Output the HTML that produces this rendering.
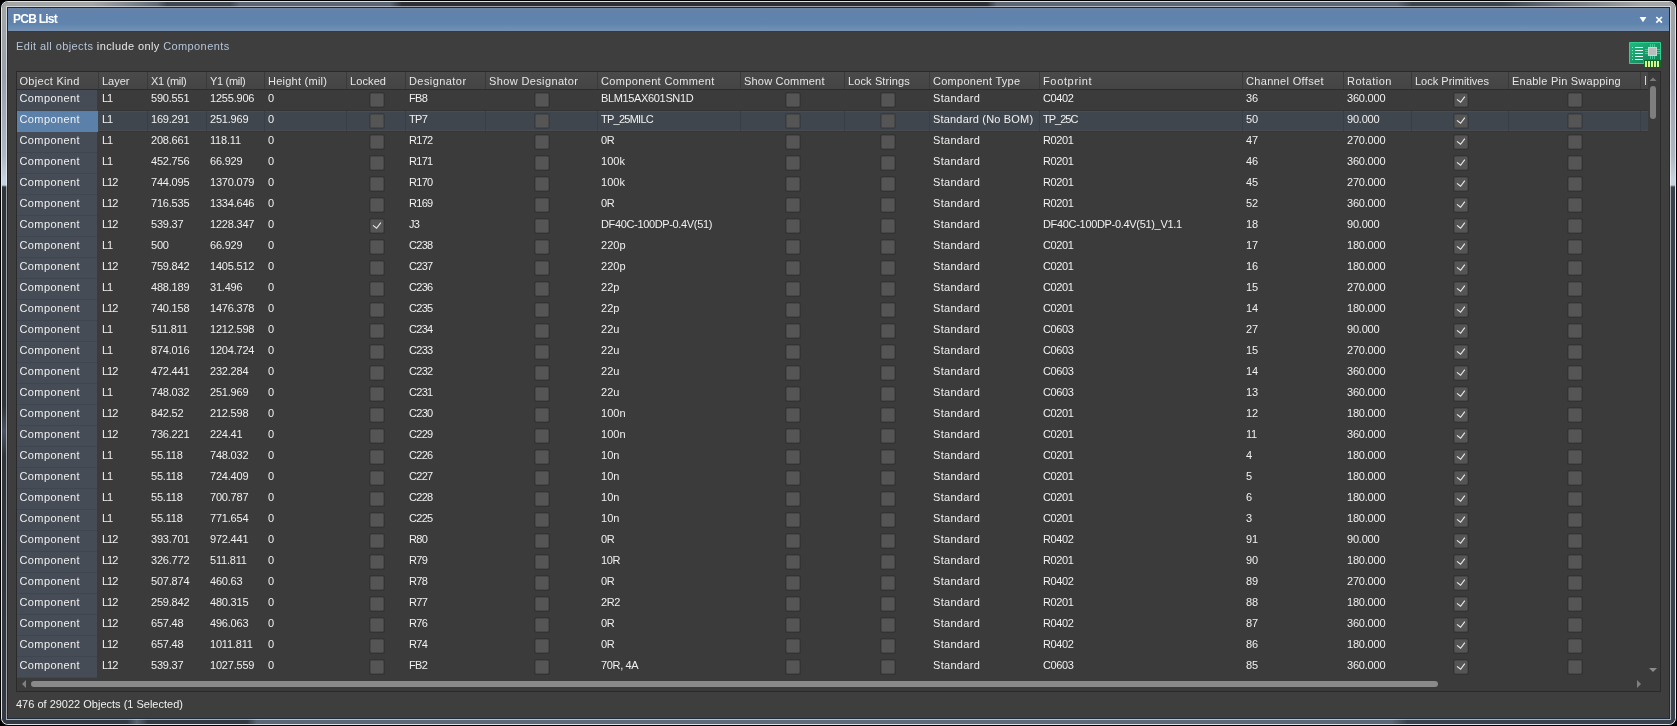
<!DOCTYPE html>
<html><head><meta charset="utf-8"><title>PCB List</title>
<style>
html,body{margin:0;padding:0;}
body{width:1677px;height:726px;overflow:hidden;background:#000;font-family:"Liberation Sans",sans-serif;font-size:11px;color:#f0f0f0;position:relative;}
div,span{position:absolute;box-sizing:border-box;white-space:nowrap;}
.t{height:16px;line-height:16px;letter-spacing:0.3px;}
.n{height:16px;line-height:16px;letter-spacing:-0.2px;}
.cb{width:14px;height:14px;background:#555;border:1px solid #474747;border-radius:1.5px;box-shadow:0 0 0 1px rgba(0,0,0,0.13);}
.h{color:#e6e6e6}
</style></head><body>
<div id="root" style="left:0;top:0;width:1677px;height:726px;will-change:transform">

<div id="frame" style="left:0;top:0;width:1677px;height:726px;border-radius:8px;background:#dde3e8;border:1px solid #000"></div>
<div id="glass" style="left:2px;top:2px;width:1673px;height:722px;border-radius:6px;background:#343a42;overflow:hidden">
<div style="left:0;top:0;width:1673px;height:5px;background:linear-gradient(90deg,#a2a6a7 0px,#a2a6a7 90px,#7c8389 130px,#5f6974 155px,#3f4650 165px,#3f4650 228px,#5b6572 238px,#5b6572 388px,#2b3036 400px,#2b3036 985px,#5c6673 995px,#5c6673 1395px,#3a424c 1410px,#3a424c 1500px,#6d747b 1560px,#a2a6a7 1640px)"></div>
<div style="left:0;bottom:0;width:1673px;height:5px;background:linear-gradient(90deg,#343a42 0px,#343a42 125px,#5a6572 135px,#343a42 146px,#343a42 245px,#5c6875 255px,#606c7a 800px,#5c6875 1390px,#3a434d 1405px,#3a434d 1673px)"></div>
<div style="left:0;top:4px;width:5px;height:714px;background:linear-gradient(180deg,#a2a6a7 0px,#98a1ab 70px,#aeb8c3 150px,#c4d1de 172px,#c4d1de 179px,#2e343a 181px,#2e343a 400px,#4a5462 425px,#2e343a 450px,#343a42 714px)"></div>
<div style="right:0;top:4px;width:5px;height:714px;background:linear-gradient(180deg,#a2a6a7 0px,#98a1ab 70px,#aeb8c3 150px,#c4d1de 172px,#c4d1de 179px,#37424c 181px,#37424c 714px)"></div>
</div>
<div style="left:6px;top:6px;width:1665px;height:1px;background:linear-gradient(90deg,#d5d7d7 -4px,#d5d7d7 86px,#c4c7ca 126px,#b7bcc0 151px,#a9acb0 161px,#a9acb0 224px,#b5bac0 234px,#b5bac0 384px,#a0a2a5 396px,#a0a2a5 981px,#b6bac0 991px,#b6bac0 1391px,#a6aaae 1406px,#a6aaae 1496px,#bdc0c4 1556px,#d5d7d7 1636px)"></div>
<div style="left:6px;top:719px;width:1665px;height:1px;background:linear-gradient(90deg,#aeb0b3 -4px,#aeb0b3 121px,#bdc1c7 131px,#aeb0b3 142px,#aeb0b3 241px,#bec3c8 251px,#bfc4ca 796px,#bec3c8 1386px,#b0b4b8 1401px,#b0b4b8 1669px)"></div>
<div style="left:6px;top:6px;width:1px;height:714px;background:linear-gradient(180deg,#d5d7d7 0px,#d1d5d9 70px,#dbdfe4 150px,#e4eaf0 172px,#e4eaf0 179px,#a1a4a6 181px,#a1a4a6 400px,#aeb2b8 425px,#a1a4a6 450px,#a4a6aa 714px)"></div>
<div style="left:1670px;top:6px;width:1px;height:714px;background:linear-gradient(180deg,#d5d7d7 0px,#d1d5d9 70px,#dbdfe4 150px,#e4eaf0 172px,#e4eaf0 179px,#a5aaae 181px,#a5aaae 714px)"></div>
<div id="inner" style="left:7px;top:7px;width:1663px;height:712px;background:#1d2b3a"></div>
<div id="panel" style="left:8px;top:8px;width:1661px;height:710px;background:#3e3e3e"></div>
<div id="title" style="left:8px;top:8px;width:1661px;height:23px;background:linear-gradient(#6b83a5 0,#6382ab 15%,#5f83ad 40%,#5f84ad 70%,#688bb2 80%,#7690b1 100%)"></div>
<div style="left:8px;top:31px;width:1661px;height:1px;background:#343b45"></div>
<span style="left:13px;top:10px;height:18px;line-height:18px;font-size:12px;font-weight:bold;color:#fff;letter-spacing:-0.75px">PCB List</span>
<span class="t" style="left:16px;top:38px;color:#b3c5d8;letter-spacing:0.4px">Edit all objects <span style="position:static;color:#e6e6e6">include only</span> Components</span>
<div id="tbl" style="left:16px;top:71px;width:1645px;height:621px;background:#3b3b3b;border:1px solid #2a2a2a"></div>
<div style="left:17px;top:72px;width:1631px;height:17px;background:linear-gradient(#4a4a4a,#444)"></div>
<div style="left:17px;top:89px;width:1631px;height:1px;background:#2c2c2c"></div>
<div style="left:17px;top:90px;width:80px;height:588px;background:#3f464f"></div>
<div style="left:17px;top:90px;width:80px;height:20px;background:#454c55"></div>
<div style="left:17px;top:111px;width:1631px;height:20px;background:#40464e"></div>
<div style="left:17px;top:111px;width:81px;height:21px;background:#5b80aa"></div>
<div style="left:98px;top:110px;width:1550px;height:1px;background:#343434"></div>
<div style="left:98px;top:131px;width:1550px;height:1px;background:#35353a"></div>
<div style="left:98px;top:111px;width:1550px;height:1px;background:#494c52"></div>
<div style="left:98px;top:130px;width:1550px;height:1px;background:#4a4c52"></div>
<div style="left:147px;top:111px;width:1px;height:20px;background:#393f47"></div>
<div style="left:206px;top:111px;width:1px;height:20px;background:#393f47"></div>
<div style="left:264px;top:111px;width:1px;height:20px;background:#393f47"></div>
<div style="left:346px;top:111px;width:1px;height:20px;background:#393f47"></div>
<div style="left:405px;top:111px;width:1px;height:20px;background:#393f47"></div>
<div style="left:485px;top:111px;width:1px;height:20px;background:#393f47"></div>
<div style="left:597px;top:111px;width:1px;height:20px;background:#393f47"></div>
<div style="left:740px;top:111px;width:1px;height:20px;background:#393f47"></div>
<div style="left:844px;top:111px;width:1px;height:20px;background:#393f47"></div>
<div style="left:929px;top:111px;width:1px;height:20px;background:#393f47"></div>
<div style="left:1039px;top:111px;width:1px;height:20px;background:#393f47"></div>
<div style="left:1242px;top:111px;width:1px;height:20px;background:#393f47"></div>
<div style="left:1343px;top:111px;width:1px;height:20px;background:#393f47"></div>
<div style="left:1411px;top:111px;width:1px;height:20px;background:#393f47"></div>
<div style="left:1508px;top:111px;width:1px;height:20px;background:#393f47"></div>
<div style="left:1640px;top:111px;width:1px;height:20px;background:#393f47"></div>
<div style="left:17px;top:132px;width:80px;height:20px;background:#454c55"></div>
<div style="left:17px;top:153px;width:80px;height:20px;background:#454c55"></div>
<div style="left:17px;top:174px;width:80px;height:20px;background:#454c55"></div>
<div style="left:17px;top:195px;width:80px;height:20px;background:#454c55"></div>
<div style="left:17px;top:216px;width:80px;height:20px;background:#454c55"></div>
<div style="left:17px;top:237px;width:80px;height:20px;background:#454c55"></div>
<div style="left:17px;top:258px;width:80px;height:20px;background:#454c55"></div>
<div style="left:17px;top:279px;width:80px;height:20px;background:#454c55"></div>
<div style="left:17px;top:300px;width:80px;height:20px;background:#454c55"></div>
<div style="left:17px;top:321px;width:80px;height:20px;background:#454c55"></div>
<div style="left:17px;top:342px;width:80px;height:20px;background:#454c55"></div>
<div style="left:17px;top:363px;width:80px;height:20px;background:#454c55"></div>
<div style="left:17px;top:384px;width:80px;height:20px;background:#454c55"></div>
<div style="left:17px;top:405px;width:80px;height:20px;background:#454c55"></div>
<div style="left:17px;top:426px;width:80px;height:20px;background:#454c55"></div>
<div style="left:17px;top:447px;width:80px;height:20px;background:#454c55"></div>
<div style="left:17px;top:468px;width:80px;height:20px;background:#454c55"></div>
<div style="left:17px;top:489px;width:80px;height:20px;background:#454c55"></div>
<div style="left:17px;top:510px;width:80px;height:20px;background:#454c55"></div>
<div style="left:17px;top:531px;width:80px;height:20px;background:#454c55"></div>
<div style="left:17px;top:552px;width:80px;height:20px;background:#454c55"></div>
<div style="left:17px;top:573px;width:80px;height:20px;background:#454c55"></div>
<div style="left:17px;top:594px;width:80px;height:20px;background:#454c55"></div>
<div style="left:17px;top:615px;width:80px;height:20px;background:#454c55"></div>
<div style="left:17px;top:636px;width:80px;height:20px;background:#454c55"></div>
<div style="left:17px;top:657px;width:80px;height:20px;background:#454c55"></div>
<div style="left:98px;top:72px;width:1px;height:17px;background:#3a3a3a"></div>
<div style="left:147px;top:72px;width:1px;height:17px;background:#3a3a3a"></div>
<div style="left:206px;top:72px;width:1px;height:17px;background:#3a3a3a"></div>
<div style="left:264px;top:72px;width:1px;height:17px;background:#3a3a3a"></div>
<div style="left:346px;top:72px;width:1px;height:17px;background:#3a3a3a"></div>
<div style="left:405px;top:72px;width:1px;height:17px;background:#3a3a3a"></div>
<div style="left:485px;top:72px;width:1px;height:17px;background:#3a3a3a"></div>
<div style="left:597px;top:72px;width:1px;height:17px;background:#3a3a3a"></div>
<div style="left:740px;top:72px;width:1px;height:17px;background:#3a3a3a"></div>
<div style="left:844px;top:72px;width:1px;height:17px;background:#3a3a3a"></div>
<div style="left:929px;top:72px;width:1px;height:17px;background:#3a3a3a"></div>
<div style="left:1039px;top:72px;width:1px;height:17px;background:#3a3a3a"></div>
<div style="left:1242px;top:72px;width:1px;height:17px;background:#3a3a3a"></div>
<div style="left:1343px;top:72px;width:1px;height:17px;background:#3a3a3a"></div>
<div style="left:1411px;top:72px;width:1px;height:17px;background:#3a3a3a"></div>
<div style="left:1508px;top:72px;width:1px;height:17px;background:#3a3a3a"></div>
<div style="left:1640px;top:72px;width:1px;height:17px;background:#3a3a3a"></div>
<span class="t h" style="left:19.5px;top:73px;letter-spacing:0.3px">Object Kind</span>
<span class="t h" style="left:102px;top:73px;letter-spacing:0px">Layer</span>
<span class="t h" style="left:151px;top:73px;letter-spacing:-0.3px">X1 (mil)</span>
<span class="t h" style="left:210px;top:73px;letter-spacing:-0.3px">Y1 (mil)</span>
<span class="t h" style="left:268px;top:73px;letter-spacing:0.25px">Height (mil)</span>
<span class="t h" style="left:350px;top:73px;letter-spacing:0.1px">Locked</span>
<span class="t h" style="left:409px;top:73px;letter-spacing:0.43px">Designator</span>
<span class="t h" style="left:489px;top:73px;letter-spacing:0.37px">Show Designator</span>
<span class="t h" style="left:601px;top:73px;letter-spacing:0.35px">Component Comment</span>
<span class="t h" style="left:744px;top:73px;letter-spacing:0.2px">Show Comment</span>
<span class="t h" style="left:848px;top:73px;letter-spacing:0.12px">Lock Strings</span>
<span class="t h" style="left:933px;top:73px;letter-spacing:0.27px">Component Type</span>
<span class="t h" style="left:1043px;top:73px;letter-spacing:0.65px">Footprint</span>
<span class="t h" style="left:1246px;top:73px;letter-spacing:0.33px">Channel Offset</span>
<span class="t h" style="left:1347px;top:73px;letter-spacing:0.5px">Rotation</span>
<span class="t h" style="left:1415px;top:73px;letter-spacing:0px">Lock Primitives</span>
<span class="t h" style="left:1512px;top:73px;letter-spacing:0.23px">Enable Pin Swapping</span>
<span class="t" style="left:19.5px;top:90px;letter-spacing:0.4px">Component</span>
<span class="n" style="left:102px;top:90px;letter-spacing:-1px">L1</span>
<span class="n" style="left:151px;top:90px">590.551</span>
<span class="n" style="left:210px;top:90px">1255.906</span>
<span class="n" style="left:268px;top:90px">0</span>
<div class="cb" style="left:370px;top:93px"></div>
<span class="n" style="left:409px;top:90px;letter-spacing:-0.7px">FB8</span>
<div class="cb" style="left:535px;top:93px"></div>
<span class="n" style="left:601px;top:90px;letter-spacing:-0.35px">BLM15AX601SN1D</span>
<div class="cb" style="left:786px;top:93px"></div>
<div class="cb" style="left:881px;top:93px"></div>
<span class="t" style="left:933px;top:90px;letter-spacing:0.3px">Standard</span>
<span class="n" style="left:1043px;top:90px;letter-spacing:-0.4px">C0402</span>
<span class="n" style="left:1246px;top:90px">36</span>
<span class="n" style="left:1347px;top:90px">360.000</span>
<div class="cb" style="left:1454px;top:93px"><svg width="12" height="12" viewBox="0 0 12 12" style="position:absolute;left:0;top:0"><path d="M2 5.4 L5.6 8.3 L9.8 2.6" fill="none" stroke="#e8e8e8" stroke-width="1.15"/></svg></div>
<div class="cb" style="left:1568px;top:93px"></div>
<span class="t" style="left:19.5px;top:111px;letter-spacing:0.4px">Component</span>
<span class="n" style="left:102px;top:111px;letter-spacing:-1px">L1</span>
<span class="n" style="left:151px;top:111px">169.291</span>
<span class="n" style="left:210px;top:111px">251.969</span>
<span class="n" style="left:268px;top:111px">0</span>
<div class="cb" style="left:370px;top:114px"></div>
<span class="n" style="left:409px;top:111px;letter-spacing:-0.7px">TP7</span>
<div class="cb" style="left:535px;top:114px"></div>
<span class="n" style="left:601px;top:111px;letter-spacing:-0.75px">TP_25MILC</span>
<div class="cb" style="left:786px;top:114px"></div>
<div class="cb" style="left:881px;top:114px"></div>
<span class="t" style="left:933px;top:111px;letter-spacing:0.18px">Standard (No BOM)</span>
<span class="n" style="left:1043px;top:111px;letter-spacing:-1.0px">TP_25C</span>
<span class="n" style="left:1246px;top:111px">50</span>
<span class="n" style="left:1347px;top:111px">90.000</span>
<div class="cb" style="left:1454px;top:114px"><svg width="12" height="12" viewBox="0 0 12 12" style="position:absolute;left:0;top:0"><path d="M2 5.4 L5.6 8.3 L9.8 2.6" fill="none" stroke="#e8e8e8" stroke-width="1.15"/></svg></div>
<div class="cb" style="left:1568px;top:114px"></div>
<span class="t" style="left:19.5px;top:132px;letter-spacing:0.4px">Component</span>
<span class="n" style="left:102px;top:132px;letter-spacing:-1px">L1</span>
<span class="n" style="left:151px;top:132px">208.661</span>
<span class="n" style="left:210px;top:132px">118.11</span>
<span class="n" style="left:268px;top:132px">0</span>
<div class="cb" style="left:370px;top:135px"></div>
<span class="n" style="left:409px;top:132px;letter-spacing:-0.7px">R172</span>
<div class="cb" style="left:535px;top:135px"></div>
<span class="n" style="left:601px;top:132px;letter-spacing:-0.35px">0R</span>
<div class="cb" style="left:786px;top:135px"></div>
<div class="cb" style="left:881px;top:135px"></div>
<span class="t" style="left:933px;top:132px;letter-spacing:0.3px">Standard</span>
<span class="n" style="left:1043px;top:132px;letter-spacing:-0.4px">R0201</span>
<span class="n" style="left:1246px;top:132px">47</span>
<span class="n" style="left:1347px;top:132px">270.000</span>
<div class="cb" style="left:1454px;top:135px"><svg width="12" height="12" viewBox="0 0 12 12" style="position:absolute;left:0;top:0"><path d="M2 5.4 L5.6 8.3 L9.8 2.6" fill="none" stroke="#e8e8e8" stroke-width="1.15"/></svg></div>
<div class="cb" style="left:1568px;top:135px"></div>
<span class="t" style="left:19.5px;top:153px;letter-spacing:0.4px">Component</span>
<span class="n" style="left:102px;top:153px;letter-spacing:-1px">L1</span>
<span class="n" style="left:151px;top:153px">452.756</span>
<span class="n" style="left:210px;top:153px">66.929</span>
<span class="n" style="left:268px;top:153px">0</span>
<div class="cb" style="left:370px;top:156px"></div>
<span class="n" style="left:409px;top:153px;letter-spacing:-0.7px">R171</span>
<div class="cb" style="left:535px;top:156px"></div>
<span class="n" style="left:601px;top:153px;letter-spacing:0.05px">100k</span>
<div class="cb" style="left:786px;top:156px"></div>
<div class="cb" style="left:881px;top:156px"></div>
<span class="t" style="left:933px;top:153px;letter-spacing:0.3px">Standard</span>
<span class="n" style="left:1043px;top:153px;letter-spacing:-0.4px">R0201</span>
<span class="n" style="left:1246px;top:153px">46</span>
<span class="n" style="left:1347px;top:153px">360.000</span>
<div class="cb" style="left:1454px;top:156px"><svg width="12" height="12" viewBox="0 0 12 12" style="position:absolute;left:0;top:0"><path d="M2 5.4 L5.6 8.3 L9.8 2.6" fill="none" stroke="#e8e8e8" stroke-width="1.15"/></svg></div>
<div class="cb" style="left:1568px;top:156px"></div>
<span class="t" style="left:19.5px;top:174px;letter-spacing:0.4px">Component</span>
<span class="n" style="left:102px;top:174px;letter-spacing:-1px">L12</span>
<span class="n" style="left:151px;top:174px">744.095</span>
<span class="n" style="left:210px;top:174px">1370.079</span>
<span class="n" style="left:268px;top:174px">0</span>
<div class="cb" style="left:370px;top:177px"></div>
<span class="n" style="left:409px;top:174px;letter-spacing:-0.7px">R170</span>
<div class="cb" style="left:535px;top:177px"></div>
<span class="n" style="left:601px;top:174px;letter-spacing:0.05px">100k</span>
<div class="cb" style="left:786px;top:177px"></div>
<div class="cb" style="left:881px;top:177px"></div>
<span class="t" style="left:933px;top:174px;letter-spacing:0.3px">Standard</span>
<span class="n" style="left:1043px;top:174px;letter-spacing:-0.4px">R0201</span>
<span class="n" style="left:1246px;top:174px">45</span>
<span class="n" style="left:1347px;top:174px">270.000</span>
<div class="cb" style="left:1454px;top:177px"><svg width="12" height="12" viewBox="0 0 12 12" style="position:absolute;left:0;top:0"><path d="M2 5.4 L5.6 8.3 L9.8 2.6" fill="none" stroke="#e8e8e8" stroke-width="1.15"/></svg></div>
<div class="cb" style="left:1568px;top:177px"></div>
<span class="t" style="left:19.5px;top:195px;letter-spacing:0.4px">Component</span>
<span class="n" style="left:102px;top:195px;letter-spacing:-1px">L12</span>
<span class="n" style="left:151px;top:195px">716.535</span>
<span class="n" style="left:210px;top:195px">1334.646</span>
<span class="n" style="left:268px;top:195px">0</span>
<div class="cb" style="left:370px;top:198px"></div>
<span class="n" style="left:409px;top:195px;letter-spacing:-0.7px">R169</span>
<div class="cb" style="left:535px;top:198px"></div>
<span class="n" style="left:601px;top:195px;letter-spacing:-0.35px">0R</span>
<div class="cb" style="left:786px;top:198px"></div>
<div class="cb" style="left:881px;top:198px"></div>
<span class="t" style="left:933px;top:195px;letter-spacing:0.3px">Standard</span>
<span class="n" style="left:1043px;top:195px;letter-spacing:-0.4px">R0201</span>
<span class="n" style="left:1246px;top:195px">52</span>
<span class="n" style="left:1347px;top:195px">360.000</span>
<div class="cb" style="left:1454px;top:198px"><svg width="12" height="12" viewBox="0 0 12 12" style="position:absolute;left:0;top:0"><path d="M2 5.4 L5.6 8.3 L9.8 2.6" fill="none" stroke="#e8e8e8" stroke-width="1.15"/></svg></div>
<div class="cb" style="left:1568px;top:198px"></div>
<span class="t" style="left:19.5px;top:216px;letter-spacing:0.4px">Component</span>
<span class="n" style="left:102px;top:216px;letter-spacing:-1px">L12</span>
<span class="n" style="left:151px;top:216px">539.37</span>
<span class="n" style="left:210px;top:216px">1228.347</span>
<span class="n" style="left:268px;top:216px">0</span>
<div class="cb" style="left:370px;top:219px"><svg width="12" height="12" viewBox="0 0 12 12" style="position:absolute;left:0;top:0"><path d="M2 5.4 L5.6 8.3 L9.8 2.6" fill="none" stroke="#e8e8e8" stroke-width="1.15"/></svg></div>
<span class="n" style="left:409px;top:216px;letter-spacing:-0.7px">J3</span>
<div class="cb" style="left:535px;top:219px"></div>
<span class="n" style="left:601px;top:216px;letter-spacing:-0.35px">DF40C-100DP-0.4V(51)</span>
<div class="cb" style="left:786px;top:219px"></div>
<div class="cb" style="left:881px;top:219px"></div>
<span class="t" style="left:933px;top:216px;letter-spacing:0.3px">Standard</span>
<span class="n" style="left:1043px;top:216px;letter-spacing:-0.32px">DF40C-100DP-0.4V(51)_V1.1</span>
<span class="n" style="left:1246px;top:216px">18</span>
<span class="n" style="left:1347px;top:216px">90.000</span>
<div class="cb" style="left:1454px;top:219px"><svg width="12" height="12" viewBox="0 0 12 12" style="position:absolute;left:0;top:0"><path d="M2 5.4 L5.6 8.3 L9.8 2.6" fill="none" stroke="#e8e8e8" stroke-width="1.15"/></svg></div>
<div class="cb" style="left:1568px;top:219px"></div>
<span class="t" style="left:19.5px;top:237px;letter-spacing:0.4px">Component</span>
<span class="n" style="left:102px;top:237px;letter-spacing:-1px">L1</span>
<span class="n" style="left:151px;top:237px">500</span>
<span class="n" style="left:210px;top:237px">66.929</span>
<span class="n" style="left:268px;top:237px">0</span>
<div class="cb" style="left:370px;top:240px"></div>
<span class="n" style="left:409px;top:237px;letter-spacing:-0.7px">C238</span>
<div class="cb" style="left:535px;top:240px"></div>
<span class="n" style="left:601px;top:237px;letter-spacing:0.05px">220p</span>
<div class="cb" style="left:786px;top:240px"></div>
<div class="cb" style="left:881px;top:240px"></div>
<span class="t" style="left:933px;top:237px;letter-spacing:0.3px">Standard</span>
<span class="n" style="left:1043px;top:237px;letter-spacing:-0.4px">C0201</span>
<span class="n" style="left:1246px;top:237px">17</span>
<span class="n" style="left:1347px;top:237px">180.000</span>
<div class="cb" style="left:1454px;top:240px"><svg width="12" height="12" viewBox="0 0 12 12" style="position:absolute;left:0;top:0"><path d="M2 5.4 L5.6 8.3 L9.8 2.6" fill="none" stroke="#e8e8e8" stroke-width="1.15"/></svg></div>
<div class="cb" style="left:1568px;top:240px"></div>
<span class="t" style="left:19.5px;top:258px;letter-spacing:0.4px">Component</span>
<span class="n" style="left:102px;top:258px;letter-spacing:-1px">L12</span>
<span class="n" style="left:151px;top:258px">759.842</span>
<span class="n" style="left:210px;top:258px">1405.512</span>
<span class="n" style="left:268px;top:258px">0</span>
<div class="cb" style="left:370px;top:261px"></div>
<span class="n" style="left:409px;top:258px;letter-spacing:-0.7px">C237</span>
<div class="cb" style="left:535px;top:261px"></div>
<span class="n" style="left:601px;top:258px;letter-spacing:0.05px">220p</span>
<div class="cb" style="left:786px;top:261px"></div>
<div class="cb" style="left:881px;top:261px"></div>
<span class="t" style="left:933px;top:258px;letter-spacing:0.3px">Standard</span>
<span class="n" style="left:1043px;top:258px;letter-spacing:-0.4px">C0201</span>
<span class="n" style="left:1246px;top:258px">16</span>
<span class="n" style="left:1347px;top:258px">180.000</span>
<div class="cb" style="left:1454px;top:261px"><svg width="12" height="12" viewBox="0 0 12 12" style="position:absolute;left:0;top:0"><path d="M2 5.4 L5.6 8.3 L9.8 2.6" fill="none" stroke="#e8e8e8" stroke-width="1.15"/></svg></div>
<div class="cb" style="left:1568px;top:261px"></div>
<span class="t" style="left:19.5px;top:279px;letter-spacing:0.4px">Component</span>
<span class="n" style="left:102px;top:279px;letter-spacing:-1px">L1</span>
<span class="n" style="left:151px;top:279px">488.189</span>
<span class="n" style="left:210px;top:279px">31.496</span>
<span class="n" style="left:268px;top:279px">0</span>
<div class="cb" style="left:370px;top:282px"></div>
<span class="n" style="left:409px;top:279px;letter-spacing:-0.7px">C236</span>
<div class="cb" style="left:535px;top:282px"></div>
<span class="n" style="left:601px;top:279px;letter-spacing:0.05px">22p</span>
<div class="cb" style="left:786px;top:282px"></div>
<div class="cb" style="left:881px;top:282px"></div>
<span class="t" style="left:933px;top:279px;letter-spacing:0.3px">Standard</span>
<span class="n" style="left:1043px;top:279px;letter-spacing:-0.4px">C0201</span>
<span class="n" style="left:1246px;top:279px">15</span>
<span class="n" style="left:1347px;top:279px">270.000</span>
<div class="cb" style="left:1454px;top:282px"><svg width="12" height="12" viewBox="0 0 12 12" style="position:absolute;left:0;top:0"><path d="M2 5.4 L5.6 8.3 L9.8 2.6" fill="none" stroke="#e8e8e8" stroke-width="1.15"/></svg></div>
<div class="cb" style="left:1568px;top:282px"></div>
<span class="t" style="left:19.5px;top:300px;letter-spacing:0.4px">Component</span>
<span class="n" style="left:102px;top:300px;letter-spacing:-1px">L12</span>
<span class="n" style="left:151px;top:300px">740.158</span>
<span class="n" style="left:210px;top:300px">1476.378</span>
<span class="n" style="left:268px;top:300px">0</span>
<div class="cb" style="left:370px;top:303px"></div>
<span class="n" style="left:409px;top:300px;letter-spacing:-0.7px">C235</span>
<div class="cb" style="left:535px;top:303px"></div>
<span class="n" style="left:601px;top:300px;letter-spacing:0.05px">22p</span>
<div class="cb" style="left:786px;top:303px"></div>
<div class="cb" style="left:881px;top:303px"></div>
<span class="t" style="left:933px;top:300px;letter-spacing:0.3px">Standard</span>
<span class="n" style="left:1043px;top:300px;letter-spacing:-0.4px">C0201</span>
<span class="n" style="left:1246px;top:300px">14</span>
<span class="n" style="left:1347px;top:300px">180.000</span>
<div class="cb" style="left:1454px;top:303px"><svg width="12" height="12" viewBox="0 0 12 12" style="position:absolute;left:0;top:0"><path d="M2 5.4 L5.6 8.3 L9.8 2.6" fill="none" stroke="#e8e8e8" stroke-width="1.15"/></svg></div>
<div class="cb" style="left:1568px;top:303px"></div>
<span class="t" style="left:19.5px;top:321px;letter-spacing:0.4px">Component</span>
<span class="n" style="left:102px;top:321px;letter-spacing:-1px">L1</span>
<span class="n" style="left:151px;top:321px">511.811</span>
<span class="n" style="left:210px;top:321px">1212.598</span>
<span class="n" style="left:268px;top:321px">0</span>
<div class="cb" style="left:370px;top:324px"></div>
<span class="n" style="left:409px;top:321px;letter-spacing:-0.7px">C234</span>
<div class="cb" style="left:535px;top:324px"></div>
<span class="n" style="left:601px;top:321px;letter-spacing:0.05px">22u</span>
<div class="cb" style="left:786px;top:324px"></div>
<div class="cb" style="left:881px;top:324px"></div>
<span class="t" style="left:933px;top:321px;letter-spacing:0.3px">Standard</span>
<span class="n" style="left:1043px;top:321px;letter-spacing:-0.4px">C0603</span>
<span class="n" style="left:1246px;top:321px">27</span>
<span class="n" style="left:1347px;top:321px">90.000</span>
<div class="cb" style="left:1454px;top:324px"><svg width="12" height="12" viewBox="0 0 12 12" style="position:absolute;left:0;top:0"><path d="M2 5.4 L5.6 8.3 L9.8 2.6" fill="none" stroke="#e8e8e8" stroke-width="1.15"/></svg></div>
<div class="cb" style="left:1568px;top:324px"></div>
<span class="t" style="left:19.5px;top:342px;letter-spacing:0.4px">Component</span>
<span class="n" style="left:102px;top:342px;letter-spacing:-1px">L1</span>
<span class="n" style="left:151px;top:342px">874.016</span>
<span class="n" style="left:210px;top:342px">1204.724</span>
<span class="n" style="left:268px;top:342px">0</span>
<div class="cb" style="left:370px;top:345px"></div>
<span class="n" style="left:409px;top:342px;letter-spacing:-0.7px">C233</span>
<div class="cb" style="left:535px;top:345px"></div>
<span class="n" style="left:601px;top:342px;letter-spacing:0.05px">22u</span>
<div class="cb" style="left:786px;top:345px"></div>
<div class="cb" style="left:881px;top:345px"></div>
<span class="t" style="left:933px;top:342px;letter-spacing:0.3px">Standard</span>
<span class="n" style="left:1043px;top:342px;letter-spacing:-0.4px">C0603</span>
<span class="n" style="left:1246px;top:342px">15</span>
<span class="n" style="left:1347px;top:342px">270.000</span>
<div class="cb" style="left:1454px;top:345px"><svg width="12" height="12" viewBox="0 0 12 12" style="position:absolute;left:0;top:0"><path d="M2 5.4 L5.6 8.3 L9.8 2.6" fill="none" stroke="#e8e8e8" stroke-width="1.15"/></svg></div>
<div class="cb" style="left:1568px;top:345px"></div>
<span class="t" style="left:19.5px;top:363px;letter-spacing:0.4px">Component</span>
<span class="n" style="left:102px;top:363px;letter-spacing:-1px">L12</span>
<span class="n" style="left:151px;top:363px">472.441</span>
<span class="n" style="left:210px;top:363px">232.284</span>
<span class="n" style="left:268px;top:363px">0</span>
<div class="cb" style="left:370px;top:366px"></div>
<span class="n" style="left:409px;top:363px;letter-spacing:-0.7px">C232</span>
<div class="cb" style="left:535px;top:366px"></div>
<span class="n" style="left:601px;top:363px;letter-spacing:0.05px">22u</span>
<div class="cb" style="left:786px;top:366px"></div>
<div class="cb" style="left:881px;top:366px"></div>
<span class="t" style="left:933px;top:363px;letter-spacing:0.3px">Standard</span>
<span class="n" style="left:1043px;top:363px;letter-spacing:-0.4px">C0603</span>
<span class="n" style="left:1246px;top:363px">14</span>
<span class="n" style="left:1347px;top:363px">360.000</span>
<div class="cb" style="left:1454px;top:366px"><svg width="12" height="12" viewBox="0 0 12 12" style="position:absolute;left:0;top:0"><path d="M2 5.4 L5.6 8.3 L9.8 2.6" fill="none" stroke="#e8e8e8" stroke-width="1.15"/></svg></div>
<div class="cb" style="left:1568px;top:366px"></div>
<span class="t" style="left:19.5px;top:384px;letter-spacing:0.4px">Component</span>
<span class="n" style="left:102px;top:384px;letter-spacing:-1px">L1</span>
<span class="n" style="left:151px;top:384px">748.032</span>
<span class="n" style="left:210px;top:384px">251.969</span>
<span class="n" style="left:268px;top:384px">0</span>
<div class="cb" style="left:370px;top:387px"></div>
<span class="n" style="left:409px;top:384px;letter-spacing:-0.7px">C231</span>
<div class="cb" style="left:535px;top:387px"></div>
<span class="n" style="left:601px;top:384px;letter-spacing:0.05px">22u</span>
<div class="cb" style="left:786px;top:387px"></div>
<div class="cb" style="left:881px;top:387px"></div>
<span class="t" style="left:933px;top:384px;letter-spacing:0.3px">Standard</span>
<span class="n" style="left:1043px;top:384px;letter-spacing:-0.4px">C0603</span>
<span class="n" style="left:1246px;top:384px">13</span>
<span class="n" style="left:1347px;top:384px">360.000</span>
<div class="cb" style="left:1454px;top:387px"><svg width="12" height="12" viewBox="0 0 12 12" style="position:absolute;left:0;top:0"><path d="M2 5.4 L5.6 8.3 L9.8 2.6" fill="none" stroke="#e8e8e8" stroke-width="1.15"/></svg></div>
<div class="cb" style="left:1568px;top:387px"></div>
<span class="t" style="left:19.5px;top:405px;letter-spacing:0.4px">Component</span>
<span class="n" style="left:102px;top:405px;letter-spacing:-1px">L12</span>
<span class="n" style="left:151px;top:405px">842.52</span>
<span class="n" style="left:210px;top:405px">212.598</span>
<span class="n" style="left:268px;top:405px">0</span>
<div class="cb" style="left:370px;top:408px"></div>
<span class="n" style="left:409px;top:405px;letter-spacing:-0.7px">C230</span>
<div class="cb" style="left:535px;top:408px"></div>
<span class="n" style="left:601px;top:405px;letter-spacing:0.05px">100n</span>
<div class="cb" style="left:786px;top:408px"></div>
<div class="cb" style="left:881px;top:408px"></div>
<span class="t" style="left:933px;top:405px;letter-spacing:0.3px">Standard</span>
<span class="n" style="left:1043px;top:405px;letter-spacing:-0.4px">C0201</span>
<span class="n" style="left:1246px;top:405px">12</span>
<span class="n" style="left:1347px;top:405px">180.000</span>
<div class="cb" style="left:1454px;top:408px"><svg width="12" height="12" viewBox="0 0 12 12" style="position:absolute;left:0;top:0"><path d="M2 5.4 L5.6 8.3 L9.8 2.6" fill="none" stroke="#e8e8e8" stroke-width="1.15"/></svg></div>
<div class="cb" style="left:1568px;top:408px"></div>
<span class="t" style="left:19.5px;top:426px;letter-spacing:0.4px">Component</span>
<span class="n" style="left:102px;top:426px;letter-spacing:-1px">L12</span>
<span class="n" style="left:151px;top:426px">736.221</span>
<span class="n" style="left:210px;top:426px">224.41</span>
<span class="n" style="left:268px;top:426px">0</span>
<div class="cb" style="left:370px;top:429px"></div>
<span class="n" style="left:409px;top:426px;letter-spacing:-0.7px">C229</span>
<div class="cb" style="left:535px;top:429px"></div>
<span class="n" style="left:601px;top:426px;letter-spacing:0.05px">100n</span>
<div class="cb" style="left:786px;top:429px"></div>
<div class="cb" style="left:881px;top:429px"></div>
<span class="t" style="left:933px;top:426px;letter-spacing:0.3px">Standard</span>
<span class="n" style="left:1043px;top:426px;letter-spacing:-0.4px">C0201</span>
<span class="n" style="left:1246px;top:426px">11</span>
<span class="n" style="left:1347px;top:426px">360.000</span>
<div class="cb" style="left:1454px;top:429px"><svg width="12" height="12" viewBox="0 0 12 12" style="position:absolute;left:0;top:0"><path d="M2 5.4 L5.6 8.3 L9.8 2.6" fill="none" stroke="#e8e8e8" stroke-width="1.15"/></svg></div>
<div class="cb" style="left:1568px;top:429px"></div>
<span class="t" style="left:19.5px;top:447px;letter-spacing:0.4px">Component</span>
<span class="n" style="left:102px;top:447px;letter-spacing:-1px">L1</span>
<span class="n" style="left:151px;top:447px">55.118</span>
<span class="n" style="left:210px;top:447px">748.032</span>
<span class="n" style="left:268px;top:447px">0</span>
<div class="cb" style="left:370px;top:450px"></div>
<span class="n" style="left:409px;top:447px;letter-spacing:-0.7px">C226</span>
<div class="cb" style="left:535px;top:450px"></div>
<span class="n" style="left:601px;top:447px;letter-spacing:0.05px">10n</span>
<div class="cb" style="left:786px;top:450px"></div>
<div class="cb" style="left:881px;top:450px"></div>
<span class="t" style="left:933px;top:447px;letter-spacing:0.3px">Standard</span>
<span class="n" style="left:1043px;top:447px;letter-spacing:-0.4px">C0201</span>
<span class="n" style="left:1246px;top:447px">4</span>
<span class="n" style="left:1347px;top:447px">180.000</span>
<div class="cb" style="left:1454px;top:450px"><svg width="12" height="12" viewBox="0 0 12 12" style="position:absolute;left:0;top:0"><path d="M2 5.4 L5.6 8.3 L9.8 2.6" fill="none" stroke="#e8e8e8" stroke-width="1.15"/></svg></div>
<div class="cb" style="left:1568px;top:450px"></div>
<span class="t" style="left:19.5px;top:468px;letter-spacing:0.4px">Component</span>
<span class="n" style="left:102px;top:468px;letter-spacing:-1px">L1</span>
<span class="n" style="left:151px;top:468px">55.118</span>
<span class="n" style="left:210px;top:468px">724.409</span>
<span class="n" style="left:268px;top:468px">0</span>
<div class="cb" style="left:370px;top:471px"></div>
<span class="n" style="left:409px;top:468px;letter-spacing:-0.7px">C227</span>
<div class="cb" style="left:535px;top:471px"></div>
<span class="n" style="left:601px;top:468px;letter-spacing:0.05px">10n</span>
<div class="cb" style="left:786px;top:471px"></div>
<div class="cb" style="left:881px;top:471px"></div>
<span class="t" style="left:933px;top:468px;letter-spacing:0.3px">Standard</span>
<span class="n" style="left:1043px;top:468px;letter-spacing:-0.4px">C0201</span>
<span class="n" style="left:1246px;top:468px">5</span>
<span class="n" style="left:1347px;top:468px">180.000</span>
<div class="cb" style="left:1454px;top:471px"><svg width="12" height="12" viewBox="0 0 12 12" style="position:absolute;left:0;top:0"><path d="M2 5.4 L5.6 8.3 L9.8 2.6" fill="none" stroke="#e8e8e8" stroke-width="1.15"/></svg></div>
<div class="cb" style="left:1568px;top:471px"></div>
<span class="t" style="left:19.5px;top:489px;letter-spacing:0.4px">Component</span>
<span class="n" style="left:102px;top:489px;letter-spacing:-1px">L1</span>
<span class="n" style="left:151px;top:489px">55.118</span>
<span class="n" style="left:210px;top:489px">700.787</span>
<span class="n" style="left:268px;top:489px">0</span>
<div class="cb" style="left:370px;top:492px"></div>
<span class="n" style="left:409px;top:489px;letter-spacing:-0.7px">C228</span>
<div class="cb" style="left:535px;top:492px"></div>
<span class="n" style="left:601px;top:489px;letter-spacing:0.05px">10n</span>
<div class="cb" style="left:786px;top:492px"></div>
<div class="cb" style="left:881px;top:492px"></div>
<span class="t" style="left:933px;top:489px;letter-spacing:0.3px">Standard</span>
<span class="n" style="left:1043px;top:489px;letter-spacing:-0.4px">C0201</span>
<span class="n" style="left:1246px;top:489px">6</span>
<span class="n" style="left:1347px;top:489px">180.000</span>
<div class="cb" style="left:1454px;top:492px"><svg width="12" height="12" viewBox="0 0 12 12" style="position:absolute;left:0;top:0"><path d="M2 5.4 L5.6 8.3 L9.8 2.6" fill="none" stroke="#e8e8e8" stroke-width="1.15"/></svg></div>
<div class="cb" style="left:1568px;top:492px"></div>
<span class="t" style="left:19.5px;top:510px;letter-spacing:0.4px">Component</span>
<span class="n" style="left:102px;top:510px;letter-spacing:-1px">L1</span>
<span class="n" style="left:151px;top:510px">55.118</span>
<span class="n" style="left:210px;top:510px">771.654</span>
<span class="n" style="left:268px;top:510px">0</span>
<div class="cb" style="left:370px;top:513px"></div>
<span class="n" style="left:409px;top:510px;letter-spacing:-0.7px">C225</span>
<div class="cb" style="left:535px;top:513px"></div>
<span class="n" style="left:601px;top:510px;letter-spacing:0.05px">10n</span>
<div class="cb" style="left:786px;top:513px"></div>
<div class="cb" style="left:881px;top:513px"></div>
<span class="t" style="left:933px;top:510px;letter-spacing:0.3px">Standard</span>
<span class="n" style="left:1043px;top:510px;letter-spacing:-0.4px">C0201</span>
<span class="n" style="left:1246px;top:510px">3</span>
<span class="n" style="left:1347px;top:510px">180.000</span>
<div class="cb" style="left:1454px;top:513px"><svg width="12" height="12" viewBox="0 0 12 12" style="position:absolute;left:0;top:0"><path d="M2 5.4 L5.6 8.3 L9.8 2.6" fill="none" stroke="#e8e8e8" stroke-width="1.15"/></svg></div>
<div class="cb" style="left:1568px;top:513px"></div>
<span class="t" style="left:19.5px;top:531px;letter-spacing:0.4px">Component</span>
<span class="n" style="left:102px;top:531px;letter-spacing:-1px">L12</span>
<span class="n" style="left:151px;top:531px">393.701</span>
<span class="n" style="left:210px;top:531px">972.441</span>
<span class="n" style="left:268px;top:531px">0</span>
<div class="cb" style="left:370px;top:534px"></div>
<span class="n" style="left:409px;top:531px;letter-spacing:-0.7px">R80</span>
<div class="cb" style="left:535px;top:534px"></div>
<span class="n" style="left:601px;top:531px;letter-spacing:-0.35px">0R</span>
<div class="cb" style="left:786px;top:534px"></div>
<div class="cb" style="left:881px;top:534px"></div>
<span class="t" style="left:933px;top:531px;letter-spacing:0.3px">Standard</span>
<span class="n" style="left:1043px;top:531px;letter-spacing:-0.4px">R0402</span>
<span class="n" style="left:1246px;top:531px">91</span>
<span class="n" style="left:1347px;top:531px">90.000</span>
<div class="cb" style="left:1454px;top:534px"><svg width="12" height="12" viewBox="0 0 12 12" style="position:absolute;left:0;top:0"><path d="M2 5.4 L5.6 8.3 L9.8 2.6" fill="none" stroke="#e8e8e8" stroke-width="1.15"/></svg></div>
<div class="cb" style="left:1568px;top:534px"></div>
<span class="t" style="left:19.5px;top:552px;letter-spacing:0.4px">Component</span>
<span class="n" style="left:102px;top:552px;letter-spacing:-1px">L12</span>
<span class="n" style="left:151px;top:552px">326.772</span>
<span class="n" style="left:210px;top:552px">511.811</span>
<span class="n" style="left:268px;top:552px">0</span>
<div class="cb" style="left:370px;top:555px"></div>
<span class="n" style="left:409px;top:552px;letter-spacing:-0.7px">R79</span>
<div class="cb" style="left:535px;top:555px"></div>
<span class="n" style="left:601px;top:552px;letter-spacing:-0.35px">10R</span>
<div class="cb" style="left:786px;top:555px"></div>
<div class="cb" style="left:881px;top:555px"></div>
<span class="t" style="left:933px;top:552px;letter-spacing:0.3px">Standard</span>
<span class="n" style="left:1043px;top:552px;letter-spacing:-0.4px">R0201</span>
<span class="n" style="left:1246px;top:552px">90</span>
<span class="n" style="left:1347px;top:552px">180.000</span>
<div class="cb" style="left:1454px;top:555px"><svg width="12" height="12" viewBox="0 0 12 12" style="position:absolute;left:0;top:0"><path d="M2 5.4 L5.6 8.3 L9.8 2.6" fill="none" stroke="#e8e8e8" stroke-width="1.15"/></svg></div>
<div class="cb" style="left:1568px;top:555px"></div>
<span class="t" style="left:19.5px;top:573px;letter-spacing:0.4px">Component</span>
<span class="n" style="left:102px;top:573px;letter-spacing:-1px">L12</span>
<span class="n" style="left:151px;top:573px">507.874</span>
<span class="n" style="left:210px;top:573px">460.63</span>
<span class="n" style="left:268px;top:573px">0</span>
<div class="cb" style="left:370px;top:576px"></div>
<span class="n" style="left:409px;top:573px;letter-spacing:-0.7px">R78</span>
<div class="cb" style="left:535px;top:576px"></div>
<span class="n" style="left:601px;top:573px;letter-spacing:-0.35px">0R</span>
<div class="cb" style="left:786px;top:576px"></div>
<div class="cb" style="left:881px;top:576px"></div>
<span class="t" style="left:933px;top:573px;letter-spacing:0.3px">Standard</span>
<span class="n" style="left:1043px;top:573px;letter-spacing:-0.4px">R0402</span>
<span class="n" style="left:1246px;top:573px">89</span>
<span class="n" style="left:1347px;top:573px">270.000</span>
<div class="cb" style="left:1454px;top:576px"><svg width="12" height="12" viewBox="0 0 12 12" style="position:absolute;left:0;top:0"><path d="M2 5.4 L5.6 8.3 L9.8 2.6" fill="none" stroke="#e8e8e8" stroke-width="1.15"/></svg></div>
<div class="cb" style="left:1568px;top:576px"></div>
<span class="t" style="left:19.5px;top:594px;letter-spacing:0.4px">Component</span>
<span class="n" style="left:102px;top:594px;letter-spacing:-1px">L12</span>
<span class="n" style="left:151px;top:594px">259.842</span>
<span class="n" style="left:210px;top:594px">480.315</span>
<span class="n" style="left:268px;top:594px">0</span>
<div class="cb" style="left:370px;top:597px"></div>
<span class="n" style="left:409px;top:594px;letter-spacing:-0.7px">R77</span>
<div class="cb" style="left:535px;top:597px"></div>
<span class="n" style="left:601px;top:594px;letter-spacing:-0.35px">2R2</span>
<div class="cb" style="left:786px;top:597px"></div>
<div class="cb" style="left:881px;top:597px"></div>
<span class="t" style="left:933px;top:594px;letter-spacing:0.3px">Standard</span>
<span class="n" style="left:1043px;top:594px;letter-spacing:-0.4px">R0201</span>
<span class="n" style="left:1246px;top:594px">88</span>
<span class="n" style="left:1347px;top:594px">180.000</span>
<div class="cb" style="left:1454px;top:597px"><svg width="12" height="12" viewBox="0 0 12 12" style="position:absolute;left:0;top:0"><path d="M2 5.4 L5.6 8.3 L9.8 2.6" fill="none" stroke="#e8e8e8" stroke-width="1.15"/></svg></div>
<div class="cb" style="left:1568px;top:597px"></div>
<span class="t" style="left:19.5px;top:615px;letter-spacing:0.4px">Component</span>
<span class="n" style="left:102px;top:615px;letter-spacing:-1px">L12</span>
<span class="n" style="left:151px;top:615px">657.48</span>
<span class="n" style="left:210px;top:615px">496.063</span>
<span class="n" style="left:268px;top:615px">0</span>
<div class="cb" style="left:370px;top:618px"></div>
<span class="n" style="left:409px;top:615px;letter-spacing:-0.7px">R76</span>
<div class="cb" style="left:535px;top:618px"></div>
<span class="n" style="left:601px;top:615px;letter-spacing:-0.35px">0R</span>
<div class="cb" style="left:786px;top:618px"></div>
<div class="cb" style="left:881px;top:618px"></div>
<span class="t" style="left:933px;top:615px;letter-spacing:0.3px">Standard</span>
<span class="n" style="left:1043px;top:615px;letter-spacing:-0.4px">R0402</span>
<span class="n" style="left:1246px;top:615px">87</span>
<span class="n" style="left:1347px;top:615px">360.000</span>
<div class="cb" style="left:1454px;top:618px"><svg width="12" height="12" viewBox="0 0 12 12" style="position:absolute;left:0;top:0"><path d="M2 5.4 L5.6 8.3 L9.8 2.6" fill="none" stroke="#e8e8e8" stroke-width="1.15"/></svg></div>
<div class="cb" style="left:1568px;top:618px"></div>
<span class="t" style="left:19.5px;top:636px;letter-spacing:0.4px">Component</span>
<span class="n" style="left:102px;top:636px;letter-spacing:-1px">L12</span>
<span class="n" style="left:151px;top:636px">657.48</span>
<span class="n" style="left:210px;top:636px">1011.811</span>
<span class="n" style="left:268px;top:636px">0</span>
<div class="cb" style="left:370px;top:639px"></div>
<span class="n" style="left:409px;top:636px;letter-spacing:-0.7px">R74</span>
<div class="cb" style="left:535px;top:639px"></div>
<span class="n" style="left:601px;top:636px;letter-spacing:-0.35px">0R</span>
<div class="cb" style="left:786px;top:639px"></div>
<div class="cb" style="left:881px;top:639px"></div>
<span class="t" style="left:933px;top:636px;letter-spacing:0.3px">Standard</span>
<span class="n" style="left:1043px;top:636px;letter-spacing:-0.4px">R0402</span>
<span class="n" style="left:1246px;top:636px">86</span>
<span class="n" style="left:1347px;top:636px">180.000</span>
<div class="cb" style="left:1454px;top:639px"><svg width="12" height="12" viewBox="0 0 12 12" style="position:absolute;left:0;top:0"><path d="M2 5.4 L5.6 8.3 L9.8 2.6" fill="none" stroke="#e8e8e8" stroke-width="1.15"/></svg></div>
<div class="cb" style="left:1568px;top:639px"></div>
<span class="t" style="left:19.5px;top:657px;letter-spacing:0.4px">Component</span>
<span class="n" style="left:102px;top:657px;letter-spacing:-1px">L12</span>
<span class="n" style="left:151px;top:657px">539.37</span>
<span class="n" style="left:210px;top:657px">1027.559</span>
<span class="n" style="left:268px;top:657px">0</span>
<div class="cb" style="left:370px;top:660px"></div>
<span class="n" style="left:409px;top:657px;letter-spacing:-0.7px">FB2</span>
<div class="cb" style="left:535px;top:660px"></div>
<span class="n" style="left:601px;top:657px;letter-spacing:-0.35px">70R, 4A</span>
<div class="cb" style="left:786px;top:660px"></div>
<div class="cb" style="left:881px;top:660px"></div>
<span class="t" style="left:933px;top:657px;letter-spacing:0.3px">Standard</span>
<span class="n" style="left:1043px;top:657px;letter-spacing:-0.4px">C0603</span>
<span class="n" style="left:1246px;top:657px">85</span>
<span class="n" style="left:1347px;top:657px">360.000</span>
<div class="cb" style="left:1454px;top:660px"><svg width="12" height="12" viewBox="0 0 12 12" style="position:absolute;left:0;top:0"><path d="M2 5.4 L5.6 8.3 L9.8 2.6" fill="none" stroke="#e8e8e8" stroke-width="1.15"/></svg></div>
<div class="cb" style="left:1568px;top:660px"></div>
<div style="left:31px;top:681px;width:1407px;height:6px;background:#8a8a8a;border-radius:3px"></div>
<svg style="position:absolute;left:21px;top:679px" width="6" height="10" viewBox="0 0 6 10"><path d="M5 1 L1 5 L5 9 Z" fill="#808080"/></svg>
<svg style="position:absolute;left:1636px;top:679px" width="6" height="10" viewBox="0 0 6 10"><path d="M1 1 L5 5 L1 9 Z" fill="#808080"/></svg>
<div style="left:1650px;top:86px;width:6px;height:33px;background:#7e7e7e;border-radius:3px"></div>
<svg style="position:absolute;left:1648px;top:76px" width="10" height="6" viewBox="0 0 10 6"><path d="M1.5 5 L5 1.5 L8.5 5 Z" fill="#7a7a7a"/></svg>
<svg style="position:absolute;left:1648px;top:667px" width="10" height="6" viewBox="0 0 10 6"><path d="M1 1 L5 5 L9 1 Z" fill="#8c8c8c"/></svg>
<div style="left:1645px;top:76px;width:1px;height:9px;background:#d8d8d8"></div>
<svg style="position:absolute;left:1638px;top:15px" width="10" height="8" viewBox="0 0 10 8"><path d="M1.6 2 L8.4 2 L5 7.2 Z" fill="#fff"/></svg>
<svg style="position:absolute;left:1654px;top:15px" width="10" height="10" viewBox="0 0 10 10"><path d="M2.3 2 L7.9 7.6 M7.9 2 L2.3 7.6" stroke="#fff" stroke-width="1.7" fill="none"/></svg>
<svg style="position:absolute;left:1628px;top:41px" width="34" height="27" viewBox="0 0 34 27">
<defs><linearGradient id="pg" x1="0" y1="0" x2="1" y2="1"><stop offset="0" stop-color="#23b980"/><stop offset="1" stop-color="#0f7d52"/></linearGradient></defs><path d="M1.5 1.5 H32.5 V19.5 H16 V22.5 H1.5 Z" fill="url(#pg)" stroke="#2ed392" stroke-width="1"/>
<rect x="16" y="19" width="17" height="7" fill="#0b6a2c"/>
<g fill="#d9f28c"><rect x="17" y="20" width="2" height="6"/><rect x="20" y="20" width="2" height="6"/><rect x="23" y="20" width="2" height="6"/><rect x="26" y="20" width="2" height="6"/><rect x="29" y="20" width="2" height="6"/></g>
<g fill="#e9fff4"><rect x="7" y="6" width="8" height="1"/><rect x="7" y="9" width="8" height="1"/><rect x="7" y="12" width="8" height="1"/><rect x="7" y="15" width="8" height="1"/><rect x="7" y="18" width="8" height="1"/></g>
<g fill="#7fe9c0"><rect x="4" y="6" width="1" height="1"/><rect x="4" y="9" width="1" height="1"/><rect x="4" y="12" width="1" height="1"/><rect x="4" y="15" width="1" height="1"/><rect x="4" y="18" width="1" height="1"/></g>
<g fill="#45c897"><rect x="22" y="3" width="1" height="3"/><rect x="24" y="3" width="1" height="3"/><rect x="26" y="3" width="1" height="3"/><rect x="22" y="15" width="1" height="3"/><rect x="24" y="15" width="1" height="3"/><rect x="26" y="15" width="1" height="3"/><rect x="17" y="8" width="3" height="1"/><rect x="17" y="10" width="3" height="1"/><rect x="17" y="12" width="3" height="1"/><rect x="29" y="8" width="3" height="1"/><rect x="29" y="10" width="3" height="1"/><rect x="29" y="12" width="3" height="1"/></g>
<rect x="20" y="6" width="9" height="9" fill="#cfd6d2"/>
<rect x="21" y="7" width="7" height="7" fill="#b9bfbc"/>
</svg>
<span class="t" style="left:16px;top:696px;letter-spacing:0">476 of 29022 Objects (1 Selected)</span>
</div></body></html>
